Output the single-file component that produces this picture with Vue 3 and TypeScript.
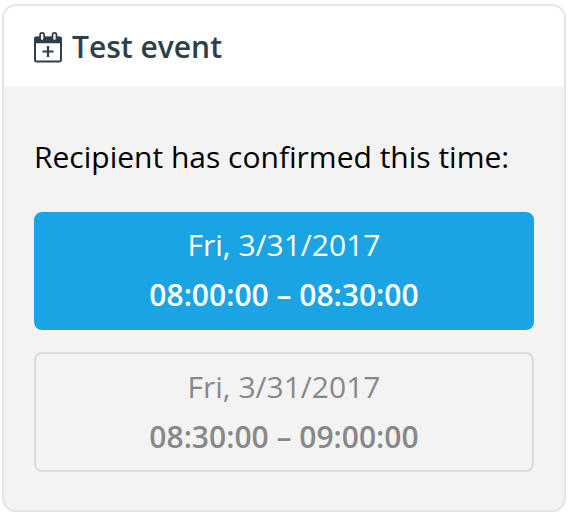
<script setup lang="ts">
interface Slot {
  date: string
  time: string
  confirmed: boolean
}

const slots: Slot[] = [
  { date: 'Fri, 3/31/2017', time: '08:00:00 – 08:30:00', confirmed: true },
  { date: 'Fri, 3/31/2017', time: '08:30:00 – 09:00:00', confirmed: false },
]
</script>

<template>
  <main class="page">
    <section class="card">
      <header class="head">
        <svg class="icon" viewBox="0 0 30 32" fill="none" stroke="currentColor">
          <rect x="1" y="6.6" width="26" height="23.8" rx="1.4" stroke-width="2" />
          <path d="M0 12.2V7.6Q0 5.7 1.9 5.7H26.1Q28 5.7 28 7.6V12.2Z" fill="currentColor" stroke="none" />
          <rect x="6.1" y="1.8" width="4" height="8" rx="2" fill="#fff" stroke-width="1.7" />
          <rect x="18.5" y="1.8" width="4" height="8" rx="2" fill="#fff" stroke-width="1.7" />
          <path d="M14 15V26M8.5 20.5H19.5" stroke-width="2.2" />
        </svg>
        <h1 class="title">Test event</h1>
      </header>
      <div class="body">
        <p class="message">Recipient has confirmed this time:</p>
        <div v-for="slot in slots" :key="slot.time" class="slot" :class="{ confirmed: slot.confirmed }">
          <span>{{ slot.date }}</span>
          <strong>{{ slot.time }}</strong>
        </div>
      </div>
    </section>
  </main>
</template>

<style>
body { background: #fff; }
</style>

<style scoped>
.page { box-sizing: border-box; height: 516px; padding: 4px 4px 4px 2px; font-family: "Open Sans", sans-serif; }
.card { box-sizing: border-box; height: 508px; border: 2px solid #e5e5e5; border-radius: 14px; background: #f3f3f3; overflow: hidden; }
.head { box-sizing: border-box; display: flex; align-items: center; height: 80px; padding: 2px 0 0 30px; gap: 8px; background: #fff; color: #2f3e48; }
.icon { width: 30px; height: 32px; }
.title { margin: 0; font-size: 30px; font-weight: 600; line-height: 40px; }
.body { padding: 50px 30px 0; }
.message { margin: 0 0 34px; font-size: 30px; line-height: 42px; color: #000; white-space: nowrap; }
.slot { box-sizing: border-box; display: flex; flex-direction: column; align-items: center; height: 120px; padding-top: 8px; margin-bottom: 22px; border: 2px solid #dcdcdc; border-radius: 8px; font-size: 30px; line-height: 50px; color: #888; }
.slot strong { font-weight: 600; }
.slot.confirmed { height: 118px; padding-top: 6px; border-color: #1ba4e4; background: #1ba4e4; color: #fff; }
</style>
